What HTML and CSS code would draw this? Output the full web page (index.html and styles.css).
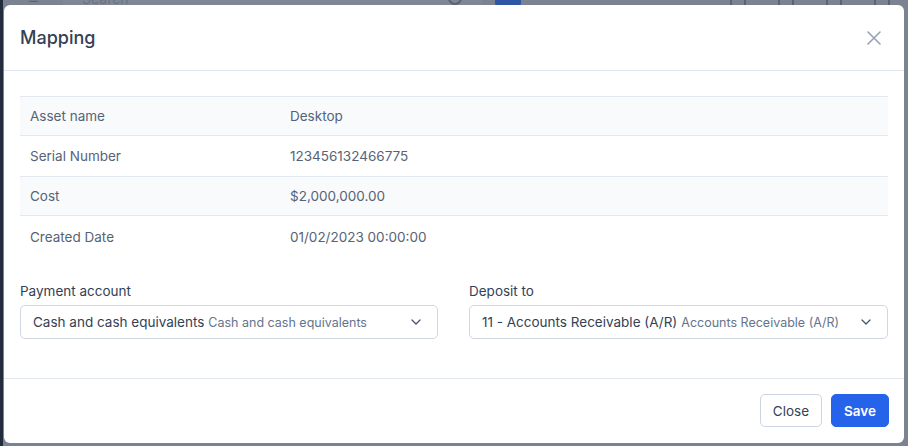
FILE: index.html
```html
<!DOCTYPE html>
<html lang="en">
<head>
    <meta charset="UTF-8">
    <meta name="viewport" content="width=device-width, initial-scale=1.0">
    <title>Mapping</title>
    <link rel="stylesheet" href="styles.css">
</head>
<body>
    <div class="page">
        <div class="sidebar"></div>
        <div class="main">
            <div class="topbar">
                <span class="menu-icon">&#8801;</span>
                <div class="search-box">
                    <span class="search-text">Search</span>
                    <span class="search-icon"></span>
                </div>
                <span class="add-btn"></span>
                <div class="topbar-icons">
                    <span class="tb-icon"></span>
                    <span class="tb-icon"></span>
                    <span class="tb-icon"></span>
                    <span class="tb-icon"></span>
                </div>
            </div>
        </div>
    </div>

    <div class="modal">
        <div class="modal-header">
            <h2>Mapping</h2>
            <button class="close-x" aria-label="Close">
                <svg width="14" height="14" viewBox="0 0 14 14" fill="none" stroke="#94a3b8" stroke-width="1.6" stroke-linecap="round">
                    <path d="M1 1 L13 13 M13 1 L1 13"/>
                </svg>
            </button>
        </div>

        <div class="modal-body">
            <div class="info-table">
                <div class="info-row shaded">
                    <span class="info-label">Asset name</span>
                    <span class="info-value">Desktop</span>
                </div>
                <div class="info-row">
                    <span class="info-label">Serial Number</span>
                    <span class="info-value">123456132466775</span>
                </div>
                <div class="info-row shaded">
                    <span class="info-label">Cost</span>
                    <span class="info-value">$2,000,000.00</span>
                </div>
                <div class="info-row">
                    <span class="info-label">Created Date</span>
                    <span class="info-value">01/02/2023 00:00:00</span>
                </div>
            </div>

            <div class="form-grid">
                <div class="form-group">
                    <label>Payment account</label>
                    <div class="select-box">
                        <span class="select-main">Cash and cash equivalents</span>
                        <span class="select-sub">Cash and cash equivalents</span>
                        <svg class="chevron" width="10" height="6" viewBox="0 0 10 6" fill="none" stroke="#475569" stroke-width="1.3" stroke-linecap="round" stroke-linejoin="round">
                            <path d="M1 1 L5 5 L9 1"/>
                        </svg>
                    </div>
                </div>
                <div class="form-group">
                    <label>Deposit to</label>
                    <div class="select-box">
                        <span class="select-main">11 - Accounts Receivable (A/R)</span>
                        <span class="select-sub">Accounts Receivable (A/R)</span>
                        <svg class="chevron" width="10" height="6" viewBox="0 0 10 6" fill="none" stroke="#475569" stroke-width="1.3" stroke-linecap="round" stroke-linejoin="round">
                            <path d="M1 1 L5 5 L9 1"/>
                        </svg>
                    </div>
                </div>
            </div>
        </div>

        <div class="modal-footer">
            <button class="btn btn-light">Close</button>
            <button class="btn btn-primary">Save</button>
        </div>
    </div>
</body>
</html>
```

FILE: styles.css
```css
body {
    margin: 0;
    background-color: #7b8392;
    font-family: Inter, "Noto Sans", sans-serif;
    overflow: hidden;
    height: 446px;
}
.page {
    display: flex;
    height: 446px;
}
.sidebar {
    width: 3px;
    background-color: #222c3c;
}
.main {
    flex: 1;
}
.topbar {
    display: flex;
    align-items: center;
    height: 20px;
    margin-top: -12px;
    padding-left: 25px;
    color: #5b6373;
}
.menu-icon {
    font-size: 18px;
    width: 35px;
}
.search-box {
    display: flex;
    align-items: center;
    justify-content: space-between;
    width: 380px;
    height: 20px;
    padding: 0 20px 0 19px;
    background-color: #7f8797;
}
.search-text {
    font-size: 14px;
    color: #6b7383;
}
.search-icon {
    width: 10px;
    height: 10px;
    border: 2px solid #5b6373;
    border-radius: 50%;
}
.add-btn {
    width: 26px;
    height: 20px;
    margin-left: 13px;
    border-radius: 5px;
    background-color: #2f56a3;
}
.topbar-icons {
    display: flex;
    gap: 32px;
    margin-left: auto;
    margin-right: 18px;
}
.tb-icon {
    width: 12px;
    height: 16px;
    border: 2px solid #5b6373;
    border-radius: 3px;
}

.modal {
    position: absolute;
    left: 4px;
    top: 5px;
    width: 900px;
    height: 438px;
    background-color: white;
    border-radius: 6px;
    display: flex;
    flex-direction: column;
}
.modal-header {
    display: flex;
    align-items: center;
    justify-content: space-between;
    height: 65px;
    padding: 0 23px 0 16px;
    border-bottom: 1px solid #e2e8f0;
}
.modal-header h2 {
    margin: 0;
    font-size: 18px;
    font-weight: 500;
    color: #334155;
}
.close-x {
    border: none;
    background: none;
    padding: 0;
    display: flex;
    cursor: pointer;
}
.modal-body {
    padding: 25px 16px 39px;
}
.info-table {
    display: flex;
    flex-direction: column;
}
.info-row {
    display: flex;
    align-items: center;
    height: 40px;
    box-sizing: border-box;
    border-top: 1px solid #e2e8f0;
    font-size: 13.5px;
    color: #566377;
}
.info-row.shaded {
    background-color: #f8fafc;
    border-bottom: 1px solid #e2e8f0;
}
.info-row.shaded + .info-row {
    border-top: none;
}
.info-row:last-child {
    height: 41px;
}
.info-label {
    width: 250px;
    padding-left: 10px;
}
.info-value {
    padding-left: 10px;
}
.form-grid {
    display: grid;
    grid-template-columns: 418px 1fr;
    gap: 31px;
    margin-top: 24px;
}
.form-group label {
    display: block;
    font-size: 13.5px;
    line-height: 20px;
    color: #334155;
    margin-bottom: 4px;
}
.select-box {
    display: flex;
    align-items: center;
    gap: 4px;
    height: 34px;
    box-sizing: border-box;
    padding: 0 16px 0 12px;
    border: 1px solid #cfd7e2;
    border-radius: 5px;
}
.select-main {
    font-size: 13.5px;
    color: #334155;
}
.select-sub {
    font-size: 12.5px;
    color: #64748b;
}
.chevron {
    margin-left: auto;
}
.modal-footer {
    display: flex;
    justify-content: flex-end;
    gap: 9px;
    margin-top: auto;
    padding: 15px 15px 16px;
    border-top: 1px solid #e2e8f0;
}
.btn {
    height: 33px;
    padding: 0 12px;
    font-family: Inter, "Noto Sans", sans-serif;
    font-size: 13.5px;
    border-radius: 5px;
    cursor: pointer;
}
.btn-light {
    background-color: white;
    border: 1px solid #cbd5e1;
    color: #334155;
}
.btn-primary {
    background-color: #2563eb;
    border: 1px solid #2563eb;
    color: white;
    font-weight: 600;
}
```
